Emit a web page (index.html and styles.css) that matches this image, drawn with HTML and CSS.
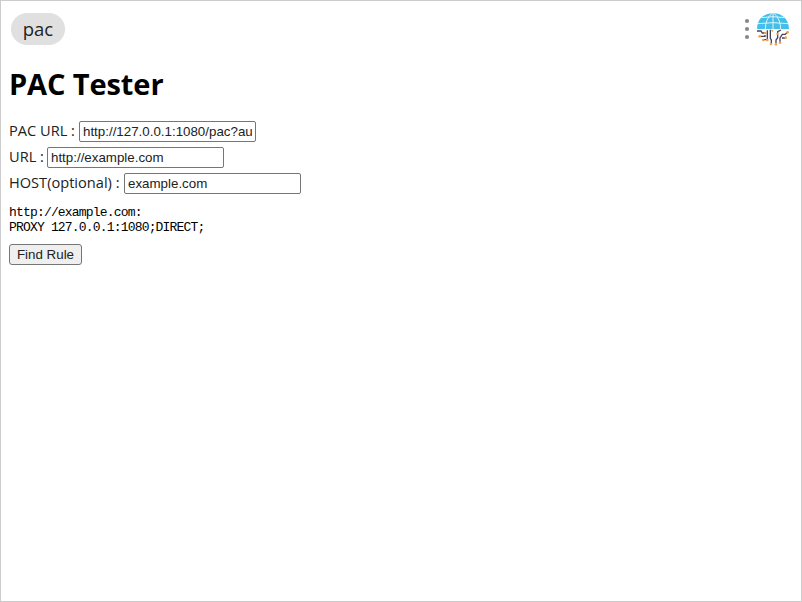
FILE: index.html
```html
<!DOCTYPE html>
<html lang="en">
<head>
<meta charset="utf-8">
<title>PAC Tester</title>
<link rel="stylesheet" href="styles.css">
</head>
<body>
<header class="topbar">
  <span class="tag">pac</span>
  <div class="tools">
    <svg class="dots" viewBox="0 0 6 22"><circle cx="3" cy="3" r="2.1"/><circle cx="3" cy="11" r="2.1"/><circle cx="3" cy="19" r="2.1"/></svg>
    <svg class="logo" viewBox="63 21 105 105">
      <path d="M66 72C67 43 85 25 114 25s47 18 48 47z" fill="#43bfe9"/>
      <g fill="none" stroke="#e5f7fd" stroke-width="2.8">
        <path d="M68 56Q114 50 160 56M79 38Q114 32 149 38M91 73Q91 42 111 25M137 73Q137 42 117 25M114 25V73"/>
      </g>
      <g fill="none" stroke="#454360" stroke-width="4">
        <path d="M66 78H78L82 84H91M90 90V94H76M97 76V104H84M106 74V100L109 105V115M123 115V105L128 98V80L138 75M135 111V99L142 88H151L158 80M141 99H151"/>
      </g>
      <g fill="#f0a050">
        <circle cx="91" cy="84" r="4"/><circle cx="74" cy="94" r="4"/><circle cx="85" cy="105" r="4"/><circle cx="97" cy="105" r="4"/><circle cx="108" cy="117" r="4"/><circle cx="123" cy="118" r="4"/><circle cx="135" cy="113" r="4"/><circle cx="152" cy="98" r="4"/><circle cx="158" cy="82" r="4"/><circle cx="112" cy="77" r="3"/><circle cx="127" cy="87" r="3.5"/>
      </g>
    </svg>
  </div>
</header>
<main>
  <h1>PAC Tester</h1>
  <div class="row"><label class="pac-label" for="pac">PAC URL :</label><input id="pac" value="http://127.0.0.1:1080/pac?au"></div>
  <div class="row"><label class="url-label" for="url">URL :</label><input id="url" value="http://example.com"></div>
  <div class="row"><label class="host-label" for="host">HOST(optional) :</label><input id="host" value="example.com"></div>
  <pre>http://example.com:
PROXY 127.0.0.1:1080;DIRECT;</pre>
  <button type="button">Find Rule</button>
</main>
</body>
</html>
```
FILE: styles.css
```css
* { box-sizing: border-box; }
html { height: 100%; }
body {
  margin: 0;
  height: 100%;
  border: 1px solid #ccc;
  padding: 11px 10px 0 8px;
  background: #fff;
  color: #222;
  font: 14.6px/26px "Open Sans", "Noto Sans", sans-serif;
  overflow: hidden;
}
.topbar { display: flex; justify-content: space-between; height: 36px; padding-left: 2px; }
.tag {
  width: 54px;
  height: 32px;
  margin-top: 1px;
  border-radius: 16px;
  background: #e0e0e0;
  text-align: center;
  font-size: 18.5px;
  line-height: 32px;
}
.tools { display: flex; }
.dots { width: 6px; height: 22px; margin: 6px 6px 0 0; fill: #888; }
.logo { width: 35px; height: 35px; }
h1 {
  margin: 15px 0 14px;
  color: #000;
  font-size: 29px;
  line-height: 41px;
  font-weight: 700;
  letter-spacing: -0.1px;
  white-space: nowrap;
}
.row { display: flex; align-items: center; height: 26px; }
label { padding-bottom: 2px; white-space: nowrap; }
.pac-label { width: 70px; }
.url-label { width: 38px; }
.host-label { width: 115px; }
input {
  width: 177px;
  height: 21px;
  padding: 1px 3px;
  border: 1px solid #767676;
  border-radius: 2px;
  background: #fff;
  color: #222;
  font: 13.333px "Liberation Sans", sans-serif;
}
pre {
  margin: 9px 0 9px;
  color: #000;
  font: 13px/15px "Liberation Mono", monospace;
  letter-spacing: -0.82px;
}
button {
  display: block;
  width: 73px;
  height: 21px;
  padding: 0;
  border: 1px solid #767676;
  border-radius: 3px;
  background: #efefef;
  color: #222;
  font: 13.333px "Liberation Sans", sans-serif;
}
```
